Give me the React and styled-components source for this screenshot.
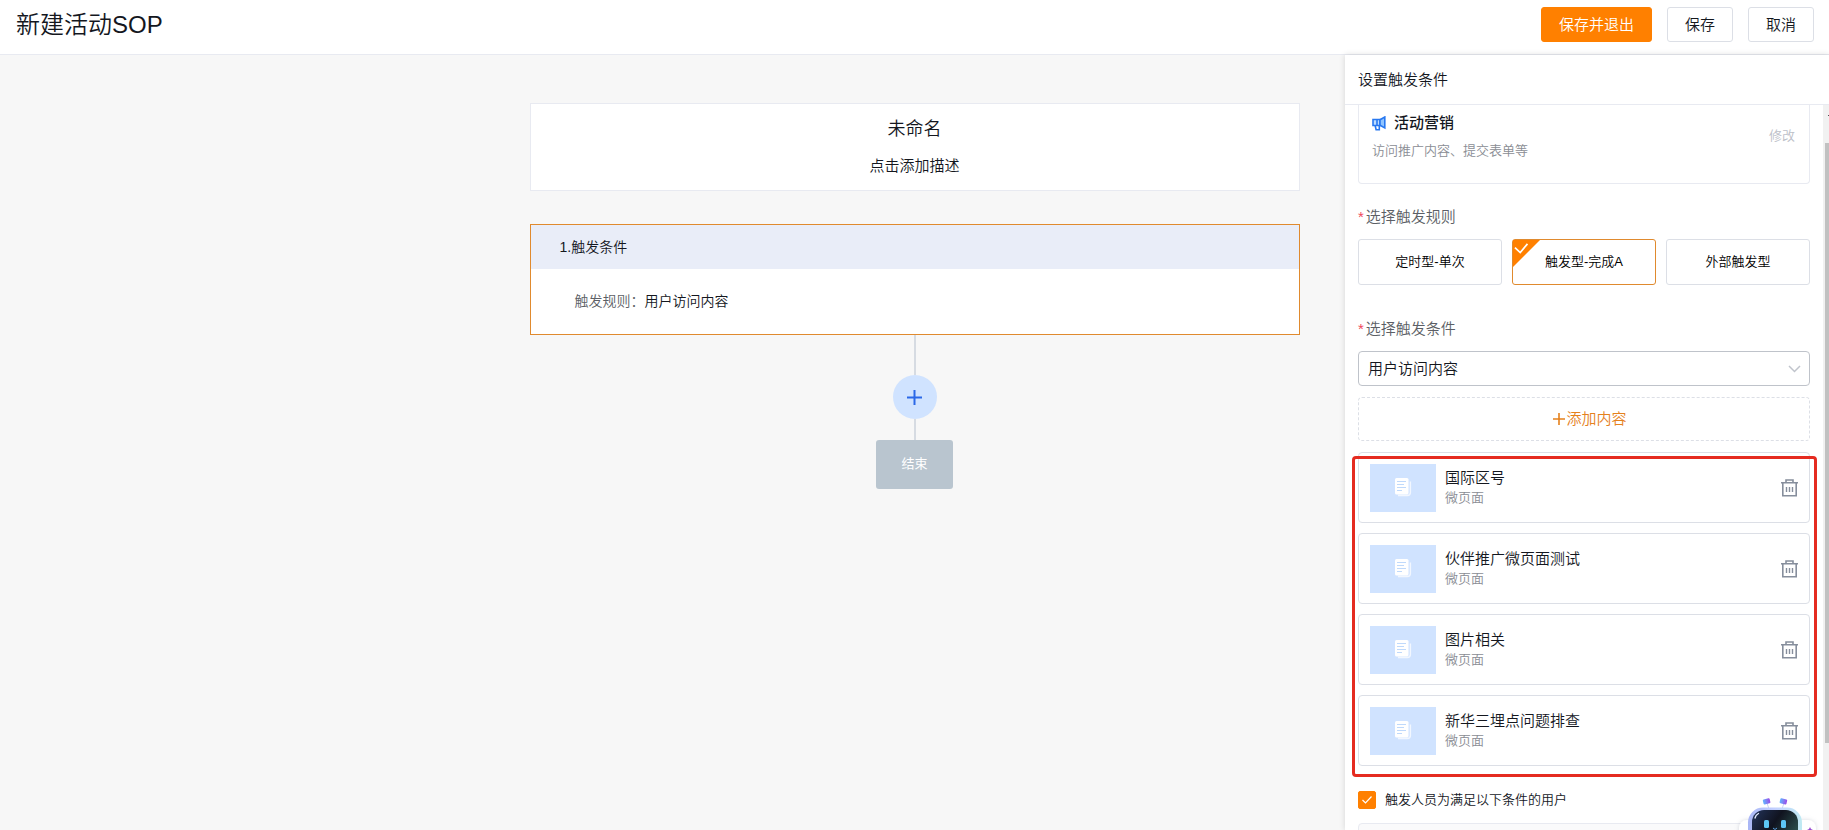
import React, { useState } from 'react';
import styled, { createGlobalStyle, ThemeProvider } from 'styled-components';

const theme = {
  color: {
    brand: '#ff8000',
    brandDeep: '#e08a2e',
    blue: '#2a68e8',
    blueSoft: '#d0e3ff',
    text: '#14171e',
    textRegular: '#5c5f66',
    textMuted: '#8a8d94',
    textDisabled: '#bcc0c8',
    border: '#dcdfe6',
    borderLight: '#e8eaf1',
    mark: '#e52b20',
  },
};

const GlobalStyle = createGlobalStyle`
  * {
    box-sizing: border-box;
  }

  body {
    margin: 0;
    color: ${theme.color.text};
    font-family: 'Liberation Sans', 'Noto Sans CJK SC', sans-serif;
    font-size: 15px;
    font-weight: 350;
    line-height: 20px;
  }

  button,
  input,
  select {
    margin: 0;
    font: inherit;
    color: inherit;
  }
`;

const Page = styled.div`
  display: flex;
  flex-direction: column;
  height: 100vh;
  overflow: hidden;
  background: #f7f7f7;
`;

const Header = styled.header`
  display: flex;
  align-items: center;
  justify-content: space-between;
  padding: 7px 15px 12px 16px;
  border-bottom: 1px solid ${(p) => p.theme.color.borderLight};
  background: #fff;
`;

const Title = styled.h1`
  margin: 0;
  font-size: 24px;
  font-weight: 350;
  line-height: 35px;
`;

const Actions = styled.div`
  display: flex;
  gap: 15px;
`;

const Button = styled.button`
  height: 35px;
  padding: 0 17px;
  border: 1px solid ${(p) => (p.$primary ? p.theme.color.brand : p.theme.color.border)};
  border-radius: 3px;
  background: ${(p) => (p.$primary ? p.theme.color.brand : '#fff')};
  color: ${(p) => (p.$primary ? '#fff' : p.theme.color.text)};
`;

// The drawer shares the grid cell with the canvas so the flow stays centred in the window
const Workspace = styled.main`
  flex: 1;
  min-height: 0;
  display: grid;
  grid-template-columns: 1fr 484px;
  grid-template-rows: 100%;
`;

const Canvas = styled.section`
  grid-column: 1 / -1;
  grid-row: 1;
  display: flex;
  flex-direction: column;
  align-items: center;
  padding-top: 48px;
`;

const Card = styled.div`
  width: 42%;
  min-width: 770px;
  border: 1px solid ${(p) => (p.$active ? p.theme.color.brandDeep : p.theme.color.borderLight)};
  background: #fff;
`;

const Intro = styled(Card)`
  display: flex;
  flex-direction: column;
  align-items: center;
  gap: 16px;
  margin-bottom: 33px;
  padding: 14px 0;
`;

const FlowName = styled.h2`
  margin: 0;
  font-size: 18px;
  font-weight: 350;
  line-height: 22px;
`;

const CardHead = styled.div`
  padding: 12px 29px;
  background: #e9edf8;
  font-size: 14px;
`;

const CardBody = styled.div`
  padding: 22px 44px 23px;
  font-size: 14px;
`;

const Muted = styled.span`
  color: ${(p) => p.theme.color.textRegular};
`;

const Line = styled.div`
  width: 2px;
  height: ${(p) => (p.$short ? 21 : 40)}px;
  background: #d6dbe2;
`;

const AddNode = styled.button`
  display: grid;
  place-items: center;
  width: 44px;
  height: 44px;
  padding: 0;
  border: 0;
  border-radius: 50%;
  background: ${(p) => p.theme.color.blueSoft};
  color: ${(p) => p.theme.color.blue};
`;

const EndNode = styled.div`
  padding: 14px 25px 15px;
  border-radius: 3px;
  background: #b9c5cf;
  color: #fff;
  font-size: 13px;
  font-weight: 400;
`;

const Drawer = styled.aside`
  grid-column: 2;
  grid-row: 1;
  z-index: 1;
  display: flex;
  flex-direction: column;
  background: #fff;
  box-shadow: 0 0 6px rgba(0, 0, 0, 0.14);
`;

const DrawerHead = styled.h3`
  margin: 0;
  padding: 15px 13px 14px;
  border-bottom: 1px solid ${(p) => p.theme.color.borderLight};
  font-size: 15px;
  font-weight: 350;
`;

const DrawerMain = styled.div`
  flex: 1;
  min-height: 0;
  display: grid;
  grid-template-columns: 1fr 6px;
  overflow: hidden;
`;

const Form = styled.form`
  padding: 0 13px;
`;

const Track = styled.div`
  position: relative;
  display: flex;
  flex-direction: column;
  align-items: flex-end;
  padding-top: 38px;
  background: #f1f1f1;

  &::before {
    content: '';
    position: absolute;
    top: 10px;
    right: 0;
    width: 1px;
    height: 1px;
    background: #505050;
  }
`;

const Thumb = styled.div`
  width: 4px;
  height: 600px;
  max-height: 87%;
  background: #c1c1c1;
`;

const Scene = styled.div`
  display: flex;
  align-items: flex-start;
  justify-content: space-between;
  padding: 8px 14px 22px 13px;
  border: 1px solid ${(p) => p.theme.color.borderLight};
  border-top: 0;
  border-radius: 0 0 4px 4px;
`;

const SceneName = styled.div`
  display: flex;
  align-items: center;
  gap: 8px;
  margin-bottom: 8px;
  font-weight: 500;
`;

const Small = styled.div`
  color: ${(p) => p.theme.color.textMuted};
  font-size: 13px;
`;

const TextButton = styled.button`
  margin-top: 13px;
  padding: 0;
  border: 0;
  background: none;
  color: ${(p) => p.theme.color.textDisabled};
  font-size: 13px;
`;

const Fieldset = styled.fieldset`
  margin: 23px 0 0;
  padding: 0;
  border: 0;
`;

const Label = styled.label`
  display: block;
  margin-bottom: 12px;
  padding: 0;
  color: ${(p) => p.theme.color.textRegular};

  &::before {
    content: '*';
    margin-right: 2px;
    color: #f0485a;
  }
`;

const Options = styled.div`
  display: grid;
  grid-template-columns: repeat(3, 1fr);
  gap: 10px;
`;

const Option = styled.label`
  position: relative;
  display: grid;
  place-items: center;
  height: 46px;
  border: 1px solid ${(p) => (p.$checked ? p.theme.color.brandDeep : p.theme.color.border)};
  border-radius: 3px;
  color: #000;
  font-size: 13px;
`;

const HiddenRadio = styled.input`
  position: absolute;
  inset: 0;
  opacity: 0;
`;

const Corner = styled.svg`
  position: absolute;
  top: 0;
  left: 0;
`;

const Field = styled.div`
  margin-top: 34px;
`;

const SelectBox = styled.div`
  position: relative;
`;

const Select = styled.select`
  display: block;
  width: 100%;
  height: 35px;
  padding: 0 32px 0 9px;
  border: 1px solid #bfc3ca;
  border-radius: 4px;
  background: #fff;
  appearance: none;
`;

const Chevron = styled.svg`
  position: absolute;
  top: 14px;
  right: 9px;
  pointer-events: none;
`;

const AddContent = styled.button`
  display: flex;
  align-items: center;
  justify-content: center;
  gap: 1px;
  width: 100%;
  height: 44px;
  margin: 11px 0;
  padding: 0 0 0 12px;
  border: 1px dashed ${(p) => p.theme.color.border};
  border-radius: 4px;
  background: #fff;
  color: #e5811c;
`;

const List = styled.ul`
  position: relative;
  display: flex;
  flex-direction: column;
  gap: 10px;
  margin: 0;
  padding: 0;
  list-style: none;
`;

const Highlight = styled.div`
  position: absolute;
  inset: 4px -7px -11px -6px;
  border: 3px solid ${(p) => p.theme.color.mark};
  border-radius: 4px;
  pointer-events: none;
`;

const Row = styled.li`
  display: flex;
  align-items: center;
  gap: 9px;
  height: 71px;
  padding: 0 11px;
  border: 1px solid ${(p) => p.theme.color.border};
  border-radius: 4px;
`;

const Cover = styled.div`
  display: grid;
  place-items: center;
  width: 66px;
  height: 48px;
  background: ${(p) => p.theme.color.blueSoft};
`;

const RowText = styled.div`
  flex: 1;
`;

const IconButton = styled.button`
  display: flex;
  padding: 0;
  border: 0;
  background: none;
  color: #868e9c;
`;

const CheckLine = styled.label`
  display: flex;
  align-items: center;
  gap: 9px;
  margin: 24px 0 13px;
  font-size: 13px;
`;

const CheckMark = styled.span`
  display: grid;

  > * {
    grid-area: 1 / 1;
  }
`;

const Checkbox = styled.input`
  width: 18px;
  height: 18px;
  border: 1px solid ${(p) => p.theme.color.border};
  border-radius: 2px;
  appearance: none;

  &:checked {
    border-color: ${(p) => p.theme.color.brand};
    background: ${(p) => p.theme.color.brand};
  }
`;

const Conditions = styled.div`
  height: 60px;
  border: 1px solid ${(p) => p.theme.color.borderLight};
  border-radius: 4px;
  background: #fafafb;
`;

const Assistant = styled.button`
  position: fixed;
  right: 7px;
  bottom: 0;
  z-index: 2;
  display: flex;
  padding: 0;
  border: 0;
  background: none;
`;

const PlusIcon = ({ size, strokeWidth }) => (
  <svg width={size} height={size} viewBox="0 0 15 15" stroke="currentColor" strokeWidth={strokeWidth}>
    <path d="M7.5 0v15M0 7.5h15" />
  </svg>
);

const MegaphoneIcon = () => (
  <svg width="14" height="15" viewBox="0 0 14 15" fill="none" stroke="#2878f0" strokeWidth="1.6">
    <path d="M1 3.5h7v6H1z" fill="#bcdcff" />
    <path d="M8 3.8 12.8 1v11L8 9.3z" fill="#8fc4ff" />
    <path d="M5 3.5v6M3.2 9.8l.9 4h3.2V9.8" />
  </svg>
);

const PageIcon = () => (
  <svg width="17" height="19" viewBox="0 0 17 19" fill="none">
    <path d="M15.4 3.5v11a3 3 0 0 1-3 3H3" stroke="#f2f7ff" strokeWidth="1.4" />
    <rect width="13.5" height="16.5" rx="1.5" fill="#fff" />
    <path d="M2 3.5h9M2 6.5h7M2 9.5h9M2 12.5h5" stroke="#bfd9fb" />
  </svg>
);

const TrashIcon = () => (
  <svg width="17" height="18" viewBox="0 0 17 18" fill="none" stroke="currentColor" strokeWidth="1.6">
    <path d="M0 3.7h17M5 3.5V1h7v2.5M1.8 4v12.7h13.4V4" />
    <path d="M5.5 8v5M8.5 8v5M11.5 8v5" strokeWidth="1.4" />
  </svg>
);

const RobotIcon = () => (
  <svg width="88" height="36" viewBox="0 0 88 36" fill="none">
    <defs>
      <linearGradient id="shell" x1="0" x2="1">
        <stop offset="0" stopColor="#a9b6f5" />
        <stop offset="0.5" stopColor="#c3d0ff" />
        <stop offset="1" stopColor="#bfeaf2" />
      </linearGradient>
      <linearGradient id="face" x1="0" y1="0" x2="1" y2="0.6">
        <stop offset="0" stopColor="#23345c" />
        <stop offset="0.5" stopColor="#10131f" />
        <stop offset="1" stopColor="#2c5550" />
      </linearGradient>
      <linearGradient id="ear" x1="0" x2="1">
        <stop offset="0" stopColor="#62b6ff" />
        <stop offset="1" stopColor="#9a4be8" />
      </linearGradient>
      <filter id="soft" x="-20%" y="-60%" width="140%" height="220%">
        <feDropShadow dx="0" dy="0" stdDeviation="2" floodColor="#8f96a8" floodOpacity="0.35" />
      </filter>
    </defs>
    <rect x="5" y="26" width="77" height="30" rx="8" fill="#fff" filter="url(#soft)" />
    <path d="M33 9l2 6M50 9l-2 6" stroke="#c9d2f2" />
    <rect x="29" y="5" width="7" height="5" rx="1" fill="url(#ear)" transform="rotate(-14 32 7)" />
    <rect x="46" y="5" width="7" height="5" rx="1" fill="url(#ear)" transform="rotate(14 50 7)" />
    <rect x="14" y="13.5" width="54" height="50" rx="15" fill="url(#shell)" />
    <rect x="18" y="16" width="46" height="40" rx="12" fill="url(#face)" />
    <path d="M21 24c.5-2.500 1.500-3.500 3.500-4.500" stroke="#e6ecff" strokeWidth="1.3" strokeLinecap="round" />
    <rect x="30" y="26" width="5" height="8" rx="1.5" fill="#5cc6f5" />
    <rect x="47" y="26" width="5" height="8" rx="1.5" fill="#5cc6f5" />
    <path d="M39 34l2 1.5 2-1.5" stroke="#5a9fe0" />
    <path d="M76 33l1 2 2 1h-6l2-1z" fill="#9a4bd0" />
  </svg>
);

const rules = ['定时型-单次', '触发型-完成A', '外部触发型'];

const contents = ['国际区号', '伙伴推广微页面测试', '图片相关', '新华三埋点问题排查'];

const RuleOptions = () => {
  const [rule, setRule] = useState(rules[1]);

  return (
    <Fieldset>
      <Label as="legend">选择触发规则</Label>
      <Options>
        {rules.map((name) => (
          <Option key={name} $checked={name === rule}>
            <HiddenRadio
              type="radio"
              name="rule"
              checked={name === rule}
              onChange={() => setRule(name)}
            />
            {name === rule && (
              <Corner width="27" height="27" viewBox="0 0 28 28" fill="none">
                <path d="M0 0h28L0 28z" fill={theme.color.brand} />
                <path d="M2 8l5.500 5L15 4" stroke="#fff" strokeWidth="1.8" />
              </Corner>
            )}
            {name}
          </Option>
        ))}
      </Options>
    </Fieldset>
  );
};

const ContentRow = ({ name }) => (
  <Row>
    <Cover>
      <PageIcon />
    </Cover>
    <RowText>
      {name}
      <Small>微页面</Small>
    </RowText>
    <IconButton type="button">
      <TrashIcon />
    </IconButton>
  </Row>
);

const TriggerDrawer = () => {
  const [filtered, setFiltered] = useState(true);

  return (
    <Drawer>
      <DrawerHead>设置触发条件</DrawerHead>
      <DrawerMain>
        <Form>
          <Scene>
            <div>
              <SceneName>
                <MegaphoneIcon />
                活动营销
              </SceneName>
              <Small>访问推广内容、提交表单等</Small>
            </div>
            <TextButton type="button">修改</TextButton>
          </Scene>

          <RuleOptions />

          <Field>
            <Label htmlFor="condition">选择触发条件</Label>
            <SelectBox>
              <Select id="condition">
                <option>用户访问内容</option>
              </Select>
              <Chevron width="13" height="8" viewBox="0 0 13 8" fill="none">
                <path d="M1 1l5.500 5.500L12 1" stroke="#c0c4cc" strokeWidth="1.5" />
              </Chevron>
            </SelectBox>
            <AddContent type="button">
              <PlusIcon size={12} strokeWidth={2} />
              添加内容
            </AddContent>
          </Field>

          <List>
            {contents.map((name) => (
              <ContentRow key={name} name={name} />
            ))}
            <Highlight as="li" aria-hidden="true" />
          </List>

          <CheckLine>
            <CheckMark>
              <Checkbox
                type="checkbox"
                checked={filtered}
                onChange={(e) => setFiltered(e.target.checked)}
              />
              <svg width="18" height="18" viewBox="0 0 18 18" fill="none" pointerEvents="none">
                <path d="M4.500 9l3 3 6-6.500" stroke="#fff" strokeWidth="1.2" />
              </svg>
            </CheckMark>
            触发人员为满足以下条件的用户
          </CheckLine>
          <Conditions />
        </Form>
        <Track>
          <Thumb />
        </Track>
      </DrawerMain>
    </Drawer>
  );
};

const App = () => {
  return (
    <ThemeProvider theme={theme}>
      <GlobalStyle />
      <Page>
        <Header>
          <Title>新建活动SOP</Title>
          <Actions>
            <Button $primary>保存并退出</Button>
            <Button>保存</Button>
            <Button>取消</Button>
          </Actions>
        </Header>
        <Workspace>
          <Canvas>
            <Intro>
              <FlowName>未命名</FlowName>
              <div>点击添加描述</div>
            </Intro>
            <Card $active>
              <CardHead>1.触发条件</CardHead>
              <CardBody>
                <Muted>触发规则：</Muted>用户访问内容
              </CardBody>
            </Card>
            <Line />
            <AddNode type="button">
              <PlusIcon size={15} strokeWidth={2} />
            </AddNode>
            <Line $short />
            <EndNode>结束</EndNode>
          </Canvas>
          <TriggerDrawer />
        </Workspace>
        <Assistant type="button">
          <RobotIcon />
        </Assistant>
      </Page>
    </ThemeProvider>
  );
};

export default App;
